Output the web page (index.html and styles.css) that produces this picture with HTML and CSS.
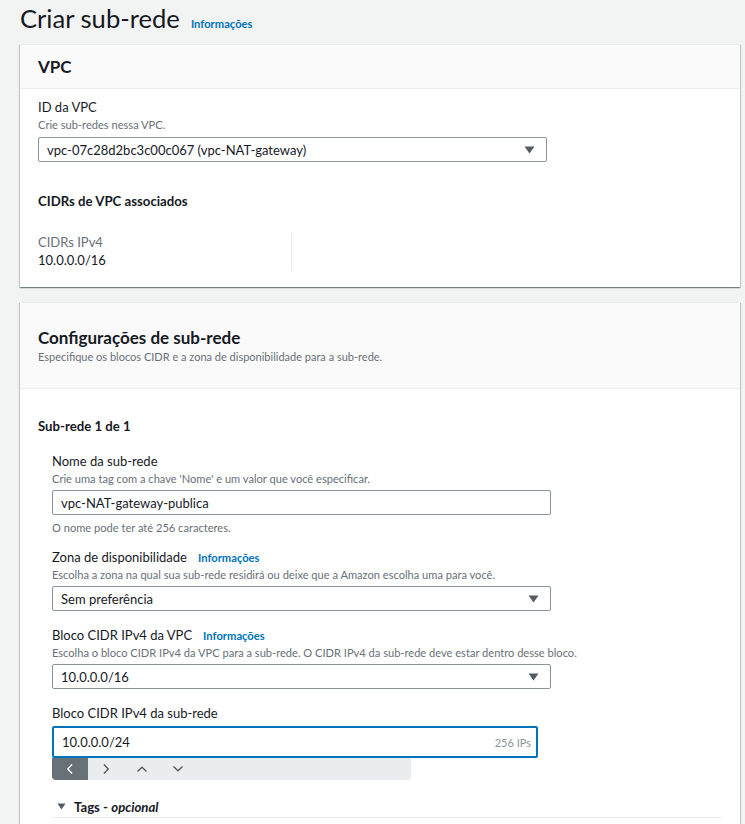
FILE: index.html
```html
<!DOCTYPE html>
<html lang="pt-BR">
<head>
<meta charset="utf-8">
<title>Criar sub-rede</title>
<link rel="stylesheet" href="styles.css">
</head>
<body>
<div class="page">
  <div class="title-row">
    <h1 class="page-title">Criar sub-rede</h1>
    <a class="info-link title-info">Informações</a>
  </div>

  <section class="card">
    <div class="card-header card-header-simple">
      <h2 class="card-title">VPC</h2>
    </div>
    <div class="card-body vpc-body">
      <div class="field">
        <div class="field-label">ID da VPC</div>
        <div class="field-desc">Crie sub-redes nessa VPC.</div>
        <div class="select select-vpc">
          <span class="select-value">vpc-07c28d2bc3c00c067 (vpc-NAT-gateway)</span>
          <svg class="caret" width="11" height="8" viewBox="0 0 11 8"><path d="M0.5 0.5 L10.5 0.5 L5.5 7.5 Z" fill="#545b64"/></svg>
        </div>
      </div>
      <h3 class="subhead">CIDRs de VPC associados</h3>
      <div class="kv-grid">
        <div class="kv">
          <div class="kv-key">CIDRs IPv4</div>
          <div class="kv-value">10.0.0.0/16</div>
        </div>
        <div class="kv kv-empty"></div>
      </div>
    </div>
  </section>

  <section class="card card-second">
    <div class="card-header card-header-desc">
      <h2 class="card-title">Configurações de sub-rede</h2>
      <div class="card-desc">Especifique os blocos CIDR e a zona de disponibilidade para a sub-rede.</div>
    </div>
    <div class="card-body subnet-body">
      <h3 class="subhead subnet-count">Sub-rede 1 de 1</h3>
      <div class="subnet-fields">
        <div class="field">
          <div class="field-label">Nome da sub-rede</div>
          <div class="field-desc">Crie uma tag com a chave 'Nome' e um valor que você especificar.</div>
          <div class="input input-name">vpc-NAT-gateway-publica</div>
          <div class="field-constraint">O nome pode ter até 256 caracteres.</div>
        </div>
        <div class="field field-after-constraint">
          <div class="field-label">Zona de disponibilidade <a class="info-link">Informações</a></div>
          <div class="field-desc">Escolha a zona na qual sua sub-rede residirá ou deixe que a Amazon escolha uma para você.</div>
          <div class="select select-wide">
            <span class="select-value">Sem preferência</span>
            <svg class="caret" width="11" height="8" viewBox="0 0 11 8"><path d="M0.5 0.5 L10.5 0.5 L5.5 7.5 Z" fill="#545b64"/></svg>
          </div>
        </div>
        <div class="field">
          <div class="field-label">Bloco CIDR IPv4 da VPC <a class="info-link">Informações</a></div>
          <div class="field-desc">Escolha o bloco CIDR IPv4 da VPC para a sub-rede. O CIDR IPv4 da sub-rede deve estar dentro desse bloco.</div>
          <div class="select select-wide">
            <span class="select-value">10.0.0.0/16</span>
            <svg class="caret" width="11" height="8" viewBox="0 0 11 8"><path d="M0.5 0.5 L10.5 0.5 L5.5 7.5 Z" fill="#545b64"/></svg>
          </div>
        </div>
        <div class="field">
          <div class="field-label">Bloco CIDR IPv4 da sub-rede</div>
          <div class="input input-focus">
            <span>10.0.0.0/24</span>
            <span class="input-suffix">256 IPs</span>
          </div>
          <div class="stepper">
            <span class="step-btn step-active">
              <svg width="8" height="12" viewBox="0 0 8 12"><path d="M6 1.5 L1.8 6 L6 10.5" fill="none" stroke="#ffffff" stroke-width="1.4"/></svg>
            </span>
            <span class="step-btn">
              <svg width="8" height="12" viewBox="0 0 8 12"><path d="M2 1.5 L6.2 6 L2 10.5" fill="none" stroke="#545b64" stroke-width="1.4"/></svg>
            </span>
            <span class="step-btn">
              <svg width="12" height="8" viewBox="0 0 12 8"><path d="M1.5 6.5 L6 2.3 L10.5 6.5" fill="none" stroke="#545b64" stroke-width="1.4"/></svg>
            </span>
            <span class="step-btn">
              <svg width="12" height="8" viewBox="0 0 12 8"><path d="M1.5 1.5 L6 5.7 L10.5 1.5" fill="none" stroke="#545b64" stroke-width="1.4"/></svg>
            </span>
          </div>
        </div>
        <div class="expander">
          <svg class="expander-caret" width="9" height="7" viewBox="0 0 9 7"><path d="M0.5 0.5 L8.5 0.5 L4.5 6.5 Z" fill="#545b64"/></svg>
          <span class="expander-title">Tags - <em>opcional</em></span>
        </div>
      </div>
    </div>
  </section>
</div>
</body>
</html>
```

FILE: styles.css
```css
* { box-sizing: border-box; }

html, body {
  margin: 0;
  padding: 0;
  background: #f2f3f3;
  color: #16191f;
  font-family: "Lato", "Open Sans", "Liberation Sans", sans-serif;
}

.page {
  padding: 2px 5px 0 20px;
}

.title-row {
  display: flex;
  align-items: baseline;
  gap: 11px;
  height: 42px;
}

.page-title {
  margin: 0;
  font-size: 25.6px;
  font-weight: 400;
  line-height: 32px;
  color: #16191f;
}

.info-link {
  color: #0073bb;
  font-size: 11.2px;
  font-weight: 700;
  text-decoration: none;
}

.card {
  background: #ffffff;
  border-top: 1px solid #eaeded;
  box-shadow: 0 1px 1px 0 rgba(0, 28, 36, 0.35), 1px 1px 1px 0 rgba(0, 28, 36, 0.15), -1px 1px 1px 0 rgba(0, 28, 36, 0.15);
}

.card-second {
  margin-top: 15px;
}

.card-header {
  background: #fafafa;
  border-bottom: 1px solid #eaeded;
  padding: 0 18px;
}

.card-header-simple {
  height: 44px;
  display: flex;
  align-items: center;
}

.card-header-desc {
  padding-top: 24px;
  padding-bottom: 23px;
}

.card-title {
  margin: 0;
  font-size: 17px;
  font-weight: 700;
  line-height: 22px;
}

.card-desc {
  font-size: 11px;
  line-height: 16px;
  color: #687078;
}

.card-body {
  padding: 0 18px;
}

.vpc-body {
  padding-top: 9px;
  padding-bottom: 16px;
}

.field-label {
  display: flex;
  align-items: baseline;
  gap: 11px;
  height: 18px;
  font-size: 13px;
  line-height: 18px;
}

.field-desc {
  font-size: 11.1px;
  line-height: 16px;
  color: #687078;
  margin-top: 1px;
}

.field-constraint {
  font-size: 11.1px;
  line-height: 16px;
  color: #687078;
  margin-top: 5px;
}

.select,
.input {
  display: flex;
  align-items: center;
  justify-content: space-between;
  height: 25px;
  border: 1px solid #879596;
  border-radius: 2px;
  padding: 0 8px;
  font-size: 13px;
  margin-top: 3px;
  background: #ffffff;
}

.select .caret {
  margin-right: 3px;
}

.select-vpc {
  width: 509px;
  margin-top: 4px;
}

.select-wide,
.input-name {
  width: 499px;
}

.input-focus {
  width: 486px;
  height: 32px;
  border: 2px solid #0073bb;
  padding: 0 5px 0 8px;
  margin-top: 4px;
}

.input-suffix {
  font-size: 11px;
  color: #879596;
}

.subhead {
  margin: 29px 0 0;
  font-size: 13.2px;
  font-weight: 700;
  line-height: 20px;
}

.kv-grid {
  display: flex;
  margin-top: 22px;
}

.kv {
  width: 254px;
  height: 38px;
  border-right: 1px solid #eaeded;
}

.kv-empty {
  border-right: none;
}

.kv-key {
  font-size: 13px;
  line-height: 18px;
  color: #687078;
}

.kv-value {
  font-size: 13px;
  line-height: 18px;
}

.subnet-body {
  padding-top: 27px;
  padding-bottom: 20px;
}

.subnet-count {
  margin: 0;
}

.subnet-fields {
  padding-left: 14px;
  margin-top: 16px;
}

.field + .field {
  margin-top: 15px;
}

.field + .field-after-constraint {
  margin-top: 12px;
}

.stepper {
  display: flex;
  width: 359px;
  height: 22px;
  background: #eaeded;
  border-radius: 0 0 4px 4px;
  overflow: hidden;
}

.step-btn {
  width: 36px;
  height: 22px;
  display: flex;
  align-items: center;
  justify-content: center;
}

.step-active {
  background: #687078;
}

.expander {
  display: flex;
  align-items: center;
  gap: 8px;
  margin-top: 17px;
  padding: 0 0 1px 5px;
  height: 21px;
  border-bottom: 1px solid #eaeded;
}

.expander-title {
  font-size: 13.2px;
  font-weight: 700;
}

.expander-title em {
  font-style: italic;
}
```
